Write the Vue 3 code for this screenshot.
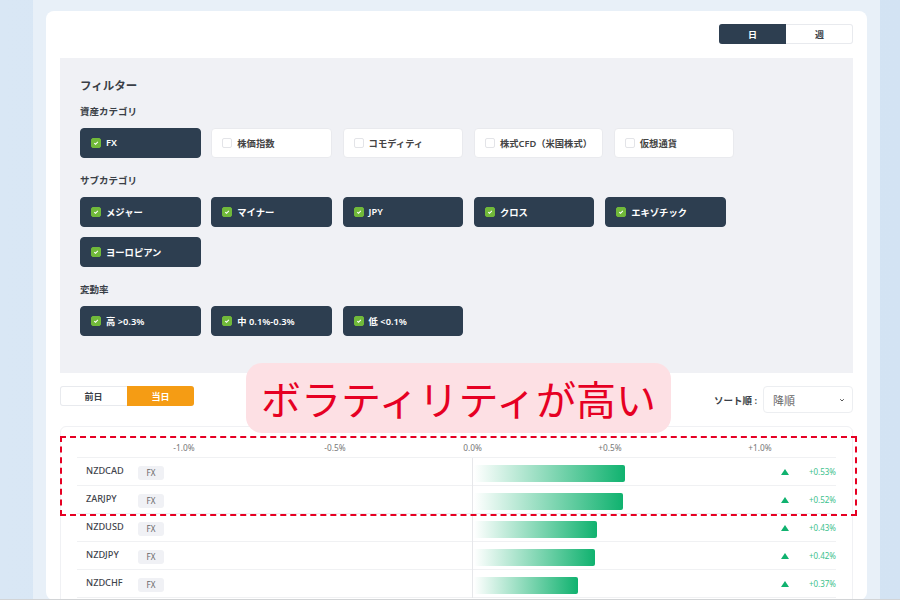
<script setup>
import { ref } from 'vue'

const assets = ref([
  { label: 'FX', on: true },
  { label: '株価指数', on: false },
  { label: 'コモディティ', on: false },
  { label: '株式CFD（米国株式）', on: false },
  { label: '仮想通貨', on: false }
])

const subs = ref([
  { label: 'メジャー', on: true },
  { label: 'マイナー', on: true },
  { label: 'JPY', on: true },
  { label: 'クロス', on: true },
  { label: 'エキゾチック', on: true },
  { label: 'ヨーロピアン', on: true }
])

const rates = ref([
  { label: '高 >0.3%', on: true },
  { label: '中 0.1%-0.3%', on: true },
  { label: '低 <0.1%', on: true }
])

const groups = [
  { title: '資産カテゴリ', items: assets },
  { title: 'サブカテゴリ', items: subs },
  { title: '変動率', items: rates }
]

const ticks = ['-1.0%', '-0.5%', '0.0%', '+0.5%', '+1.0%']

const rows = [
  { name: 'NZDCAD', bar: 151, value: '+0.53%' },
  { name: 'ZARJPY', bar: 149, value: '+0.52%' },
  { name: 'NZDUSD', bar: 123, value: '+0.43%' },
  { name: 'NZDJPY', bar: 121, value: '+0.42%' },
  { name: 'NZDCHF', bar: 104, value: '+0.37%' }
]
</script>

<template>
  <div class="page">
    <div class="column">
      <div class="card">
        <div class="top">
          <div class="toggle">
            <span class="tab tab--dark">日</span>
            <span class="tab">週</span>
          </div>
        </div>

        <section class="filter">
          <h2 class="filter__title">フィルター</h2>
          <div v-for="g in groups" :key="g.title" class="group">
            <h3 class="group__title">{{ g.title }}</h3>
            <div class="options">
              <div v-for="o in g.items.value" :key="o.label" class="opt" :class="{ 'opt--on': o.on }">
                <span class="box">
                  <svg v-if="o.on" viewBox="0 0 10 10" width="10" height="10">
                    <path d="M2.8 5.2 4.4 6.6 7.3 3.6" fill="none" stroke="#fff" stroke-width="1.3" />
                  </svg>
                </span>
                <span>{{ o.label }}</span>
              </div>
            </div>
          </div>
        </section>

        <div class="controls">
          <div class="day">
            <span class="day__tab">前日</span>
            <span class="day__tab day__tab--on">当日</span>
          </div>
          <div class="sort">
            <span class="sort__label">ソート順 :</span>
            <div class="select">
              <span>降順</span>
              <svg viewBox="0 0 8 8" width="8" height="8">
                <path d="M2.2 3.2 4 5 5.8 3.2" fill="none" stroke="#555" stroke-width="1" />
              </svg>
            </div>
          </div>
        </div>

        <div class="chart">
          <div class="axis">
            <span v-for="t in ticks" :key="t">{{ t }}</span>
          </div>
          <div v-for="r in rows" :key="r.name" class="row">
            <span class="row__name">{{ r.name }}</span>
            <span class="row__tag">FX</span>
            <div class="row__track">
              <div class="row__bar" :style="{ width: r.bar + 'px' }"></div>
            </div>
            <span class="row__tri"></span>
            <span class="row__val">{{ r.value }}</span>
          </div>
        </div>
      </div>
    </div>

    <div class="callout">ボラティリティが高い</div>
    <div class="dashed"></div>
  </div>
</template>

<style scoped>
.page {
  position: relative;
  height: 600px;
  box-sizing: border-box;
  overflow: hidden;
  background: linear-gradient(90deg, #d9e7f5 0%, #d3e3f3 100%);
  border-bottom: 1px solid #d2d4d6;
  font-family: "Noto Sans", "Noto Sans CJK JP", sans-serif;
  color: #3a3f47;
}
.column {
  width: 847px;
  height: 600px;
  margin-left: 33px;
  padding: 11px 13px 0;
  box-sizing: border-box;
  background: #e8f0f8;
}
.card {
  width: 821px;
  height: 589px;
  box-sizing: border-box;
  padding: 13px 14px 0;
  background: #fff;
  border-radius: 8px;
  overflow: hidden;
}
.top {
  display: flex;
  justify-content: flex-end;
  height: 34px;
}
.toggle {
  display: flex;
  width: 134px;
  height: 20px;
  border-radius: 3px;
  box-shadow: 0 0 0 1px #e8eaee inset;
  overflow: hidden;
}
.tab {
  flex: 1;
  display: flex;
  align-items: center;
  justify-content: center;
  font-size: 9px;
  font-weight: 700;
  color: #3a3f47;
}
.tab--dark {
  background: #2d3e50;
  color: #fff;
}
.filter {
  height: 315px;
  box-sizing: border-box;
  padding: 21px 20px 0;
  background: #f0f1f5;
}
.filter__title {
  margin: 0;
  font-size: 11.5px;
  line-height: 14px;
  font-weight: 700;
}
.group {
  margin-top: 12px;
}
.group + .group {
  margin-top: 16px;
}
.group__title {
  margin: 0 0 10px;
  font-size: 9.5px;
  line-height: 13px;
  font-weight: 700;
}
.options {
  display: flex;
  flex-wrap: wrap;
  gap: 10px 10.8px;
  width: 680px;
}
.opt {
  display: flex;
  align-items: center;
  gap: 5px;
  min-width: 120.5px;
  height: 30px;
  box-sizing: border-box;
  padding: 0 10px 1px;
  background: #fff;
  border: 1px solid #e9eaee;
  border-radius: 4px;
  font-size: 9.3px;
  font-weight: 600;
  white-space: nowrap;
  color: #444;
}
.opt--on {
  background: #2d3e50;
  border-color: #2d3e50;
  color: #fff;
}
.box {
  width: 10px;
  height: 10px;
  box-sizing: border-box;
  flex: none;
  display: flex;
  align-items: center;
  justify-content: center;
  background: #fff;
  border: 1px solid #e3e4e8;
  border-radius: 2px;
}
.opt--on .box {
  background: #71b93a;
  border-color: #71b93a;
}
.controls {
  display: flex;
  justify-content: space-between;
  align-items: flex-start;
  height: 40px;
  margin-top: 13px;
}
.day {
  display: flex;
  width: 134px;
  height: 20px;
  border-radius: 3px;
  box-shadow: 0 0 0 1px #e8eaee inset;
  overflow: hidden;
}
.day__tab {
  flex: 1;
  display: flex;
  align-items: center;
  justify-content: center;
  font-size: 9px;
  font-weight: 700;
}
.day__tab--on {
  background: #f59c14;
  color: #fff;
}
.sort {
  display: flex;
  align-items: center;
  gap: 6px;
  font-size: 9.5px;
  font-weight: 600;
}
.select {
  display: flex;
  align-items: center;
  justify-content: space-between;
  width: 90px;
  height: 27px;
  box-sizing: border-box;
  padding: 0 6px 0 9px;
  border: 1px solid #eceef1;
  border-radius: 4px;
  font-size: 11px;
  font-weight: 400;
  color: #666;
}
.chart {
  height: 200px;
  box-sizing: border-box;
  padding: 0 16px;
  border: 1px solid #f0f1f4;
  border-radius: 6px 6px 0 0;
}
.axis {
  display: grid;
  grid-template-columns: 150px 152px 123px 152px 148px;
  align-items: end;
  height: 31px;
  box-sizing: border-box;
  padding: 0 2px 3px 32px;
  font-size: 8.3px;
  line-height: 12px;
  color: #777;
  text-align: center;
  border-bottom: 1px solid #f0f1f3;
}
.row {
  display: flex;
  align-items: center;
  height: 28px;
  box-sizing: border-box;
  border-bottom: 1px solid #f0f1f3;
}
.row__name {
  width: 52px;
  margin-left: 9px;
  margin-top: -2px;
  font-size: 9.2px;
  font-weight: 500;
  color: #3f444c;
}
.row__tag {
  width: 26px;
  height: 14px;
  display: flex;
  align-items: center;
  justify-content: center;
  margin-top: 2px;
  background: #f0f1f5;
  border-radius: 3px;
  font-size: 8px;
  color: #666;
}
.row__track {
  width: 309px;
  height: 28px;
  margin-left: 307.5px;
  border-left: 1px solid #e6e7ea;
  box-sizing: border-box;
  display: flex;
  align-items: center;
  padding: 3px 0 0 1px;
}
.row__bar {
  height: 17px;
  border-radius: 0 2px 2px 0;
  background: linear-gradient(90deg, rgba(16, 178, 111, 0) 0%, #10b26f 100%);
}
.row__tri {
  width: 0;
  height: 0;
  border-left: 4px solid transparent;
  border-right: 4px solid transparent;
  border-bottom: 6px solid #10b26f;
}
.row__val {
  width: 43px;
  margin-left: auto;
  text-align: right;
  font-size: 8px;
  color: #3cc18c;
}
.callout {
  position: absolute;
  left: 246px;
  top: 363px;
  width: 425px;
  height: 70px;
  display: flex;
  align-items: center;
  justify-content: center;
  background: #fde0e4;
  border-radius: 16px;
  color: #e60023;
  font-family: "Noto Sans CJK JP", sans-serif;
  font-size: 40px;
  font-weight: 400;
  white-space: nowrap;
}
.dashed {
  position: absolute;
  left: 60px;
  top: 436px;
  width: 797px;
  height: 80px;
  box-sizing: border-box;
  border: 2px dashed #e60023;
}
</style>

<style>
body {
  margin: 0;
}
</style>
